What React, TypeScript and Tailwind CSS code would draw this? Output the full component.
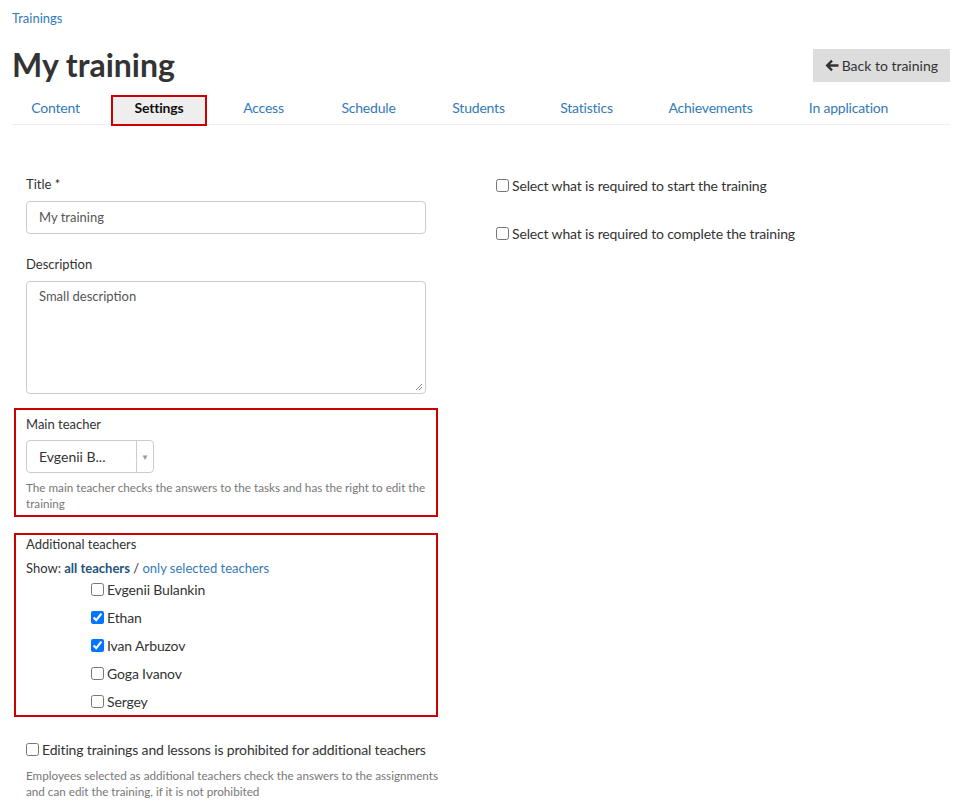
import React from 'react';

// widths picked so the tab centres line up with the original page
const tabs = [
  { name: 'Content', w: 'w-[87px]' },
  { name: 'Settings', w: 'w-[96px]' },
  { name: 'Access', w: 'w-[89px]' },
  { name: 'Schedule', w: 'w-[97px]' },
  { name: 'Students', w: 'w-[99px]' },
  { name: 'Statistics', w: 'w-[93px]' },
  { name: 'Achievements', w: 'w-[131px]' },
  { name: 'In application', w: 'w-[121px]' },
];

const teachers = [
  { name: 'Evgenii Bulankin', checked: false },
  { name: 'Ethan', checked: true },
  { name: 'Ivan Arbuzov', checked: true },
  { name: 'Goga Ivanov', checked: false },
  { name: 'Sergey', checked: false },
];

function ArrowIcon() {
  return (
    <svg width="14" height="13" viewBox="0 0 14 13" className="fill-[#333]">
      <path d="M0.5 6.5 L6.2 0.8 L7.9 2.5 L5.1 5.2 H13.5 V7.8 H5.1 L7.9 10.5 L6.2 12.2 Z" />
    </svg>
  );
}

function Check({ label, defaultChecked = false }: { label: string; defaultChecked?: boolean }) {
  return (
    <label className="flex items-center gap-[3px] whitespace-nowrap text-[14px] tracking-[-0.15px] text-[#333]">
      <input type="checkbox" defaultChecked={defaultChecked} className="m-0 h-[13px] w-[13px]" />
      <span>{label}</span>
    </label>
  );
}

export default function App() {
  return (
    <div className="min-h-screen bg-white pl-[12px] pr-[10px] font-['Lato','Open_Sans',sans-serif] text-[#333]">
      <div className="pt-[10px] text-[13px] leading-[17px] text-[#337ab7]">Trainings</div>

      <div className="mt-[18px] flex items-start justify-between">
        <h1 className="text-[32px] font-bold leading-[40px] text-[#333]">My training</h1>
        <button className="mt-[4px] flex h-[33px] items-center gap-[3px] bg-[#ddd] px-[12px] text-[14px] text-[#333]">
          <ArrowIcon />
          <span>Back to training</span>
        </button>
      </div>

      <div className="mt-[10px] flex border-b border-[#eee]">
        {tabs.map((t, i) => (
          <div
            key={t.name}
            className={
              t.w +
              ' -mb-[2px] pb-[5px] text-center text-[14px] leading-[22px] tracking-[-0.2px] ' +
              (i === 0 ? '' : 'ml-[12px] ') +
              (t.name === 'Settings'
                ? 'border-2 border-[#c00] bg-[#eee] font-bold text-[#111]'
                : 'border-2 border-transparent text-[#337ab7]')
            }
          >
            {t.name}
          </div>
        ))}
      </div>

      <div className="flex">
        <div className="ml-[2px] w-[424px] pt-[50px]">
          <div className="px-[12px]">
            <div className="text-[13px] leading-[18px]">Title *</div>
            <div className="mt-[8px] flex h-[33px] items-center rounded-[4px] border border-[#ccc] px-[12px] text-[13px] text-[#555]">
              My training
            </div>
            <div className="mt-[21px] text-[13px] leading-[18px]">Description</div>
            <div className="relative mt-[8px] h-[113px] rounded-[4px] border border-[#ccc] px-[12px] pt-[5px] text-[13px] text-[#555]">
              Small description
              <svg width="8" height="8" viewBox="0 0 8 8" className="absolute bottom-[2px] right-[2px] stroke-[#888]">
                <path d="M1 7 L7 1 M4 7 L7 4" />
              </svg>
            </div>
          </div>

          <div className="mt-[14px] border-2 border-[#c00] px-[10px] pb-[4px] pt-[5px]">
            <div className="text-[13px] leading-[18px]">Main teacher</div>
            <div className="mt-[7px] flex h-[33px] w-[128px] items-center rounded-[4px] border border-[#ccc] text-[14px] text-[#333]">
              <span className="w-[109px] pl-[12px]">Evgenii B...</span>
              <span className="flex h-full flex-1 items-center justify-center border-l border-[#ccc] text-[8px] text-[#999]">
                ▼
              </span>
            </div>
            <div className="mt-[6px] whitespace-nowrap text-[11.7px] leading-[16px] text-[#777]">
              The main teacher checks the answers to the tasks and has the right to edit the
              <br />
              training
            </div>
          </div>

          <div className="mt-[16px] border-2 border-[#c00] px-[10px]">
            <div className="text-[13px] leading-[18px]">Additional teachers</div>
            <div className="mt-[6px] text-[13px] leading-[18px]">
              Show: <span className="font-bold text-[#23527c]">all teachers</span> /{' '}
              <span className="text-[#337ab7]">only selected teachers</span>
            </div>
            <div className="-mt-[2px] pl-[65px]">
              {teachers.map((t) => (
                <div key={t.name} className="flex h-[28px] items-center">
                  <Check label={t.name} defaultChecked={t.checked} />
                </div>
              ))}
            </div>
          </div>

          <div className="px-[12px] pt-[22px]">
            <Check label="Editing trainings and lessons is prohibited for additional teachers" />
            <div className="mt-[7px] whitespace-nowrap text-[11.7px] leading-[16px] text-[#777]">
              Employees selected as additional teachers check the answers to the assignments
              <br />
              and can edit the training, if it is not prohibited
            </div>
          </div>
        </div>

        <div className="ml-[58px] pt-[50px]">
          <Check label="Select what is required to start the training" />
          <div className="mt-[27px]">
            <Check label="Select what is required to complete the training" />
          </div>
        </div>
      </div>
    </div>
  );
}
